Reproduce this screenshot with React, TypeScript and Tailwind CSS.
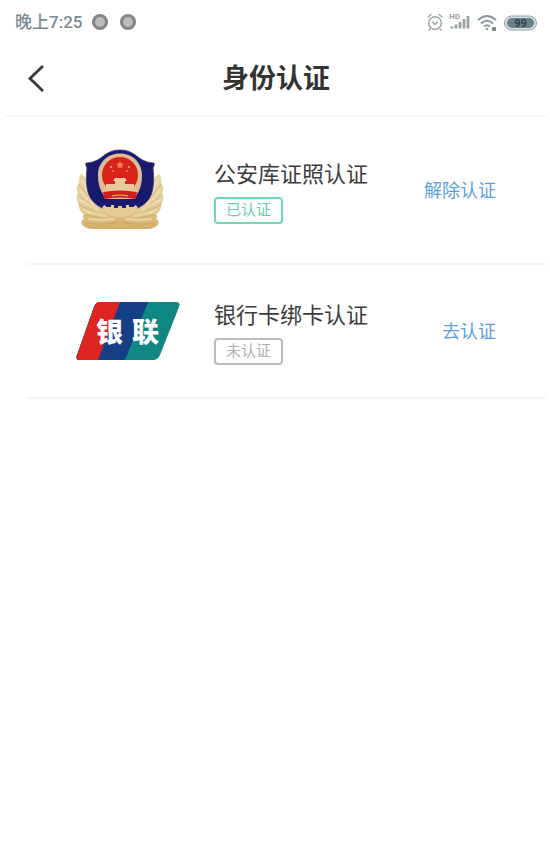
import type { ReactNode } from 'react';
import clsx from 'clsx';

const PoliceEmblem = () => (
  <svg viewBox="0 0 88 82" className="h-[82px] w-[88px]" aria-hidden="true">
    <defs>
      <linearGradient id="gold" x1="0" y1="0" x2="0" y2="1">
        <stop offset="0" stopColor="#e9d6ac" />
        <stop offset="0.6" stopColor="#e3cb97" />
        <stop offset="1" stopColor="#d2ad66" />
      </linearGradient>
    </defs>

    <path
      d="M5 25Q8 25 12 33L24 56H64L76 33Q80 25 83 25Q86 28 85 34Q89 38 86 44Q89 50 85 55Q86 61 80 65Q82 68 80 70Q84 72 82 75Q80 80 70 80H18Q8 80 6 75Q4 72 8 70Q6 68 8 65Q2 61 3 55Q-1 50 2 44Q-1 38 3 34Q2 28 5 25Z"
      fill="url(#gold)"
    />
    <g fill="none" stroke="#c19a52" strokeWidth="1" strokeLinecap="round" opacity="0.45">
      <path d="M3 35Q9 42 14 52M2 45Q8 50 17 60M3 56Q10 59 22 65M8 66Q16 67 29 70M10 74Q28 77 42 73" />
      <path d="M85 35Q79 42 74 52M86 45Q80 50 71 60M85 56Q78 59 66 65M80 66Q72 67 59 70M78 74Q60 77 46 73" />
    </g>
    <g fill="none" stroke="#f4e6c4" strokeWidth="2.500" strokeLinecap="round" opacity="0.5">
      <path d="M6 31Q9 38 13 44M4 41Q9 48 17 55M4 51Q12 56 22 61M7 61Q17 65 30 67M13 70Q26 72 38 70" />
      <path d="M82 31Q79 38 75 44M84 41Q79 48 71 55M84 51Q76 56 66 61M81 61Q71 65 58 67M75 70Q62 72 50 70" />
    </g>

    <path
      d="M44 1C36 1 31 4 26 8C21 12 15 14 10 14Q9 16 11 19C10 29 10 38 13 46Q16 54 26 59H62Q72 54 75 46C78 38 78 29 77 19Q79 16 78 14C73 14 67 12 62 8C57 4 52 1 44 1Z"
      fill="#191970"
      stroke="#3d356f"
      strokeWidth="0.800"
    />
    <path
      d="M44 4.500C31 4.500 22 14 22 26C22 35 24 41 28 47Q29 50 32 50H56Q59 50 60 47C64 41 66 35 66 26C66 14 57 4.500 44 4.500Z"
      fill="#dcbd93"
    />
    <circle cx="44" cy="26" r="18" fill="#d8231d" />
    <g fill="#ef8a54">
      <path d="M44 12l1.200 2.700 2.900.2-2.200 1.900.7 2.800-2.600-1.500-2.500 1.500.7-2.800-2.200-1.900 2.900-.2Z" />
      <circle cx="35" cy="18" r="1.300" />
      <circle cx="37" cy="22" r="1.100" />
      <circle cx="53" cy="18" r="1.300" />
      <circle cx="51" cy="22" r="1.100" />
    </g>
    <path
      d="M39 29H49L51 32H49V35H58V40H61V43H27V40H30V35H39V32H37Z"
      fill="#ecc99a"
    />
    <path d="M27 43Q44 40 61 43L60 50Q44 47 28 50Z" fill="#cf211c" />
    <path d="M36 47Q44 45 52 47" stroke="#e58e62" strokeWidth="1.500" fill="none" />
    <path
      d="M26 59l2-3 3 2h4v-2h3v3h4v-2h4v2h4v-3h3v2h4l3-2 2 3-7 7Q44 70 33 66Z"
      fill="#e4ca94"
    />
  </svg>
);

const UnionPayLogo = () => (
  <svg viewBox="0 0 104 58" className="h-[58px] w-[104px]" aria-hidden="true">
    <defs>
      <clipPath id="card">
        <path d="M24 0H100Q105 0 103 5L84 53Q82 58 77 58H4Q-1 58 1 53L18 5Q20 0 24 0Z" />
      </clipPath>
    </defs>
    <g clipPath="url(#card)">
      <path d="M0 0H104V58H0Z" fill="#0f8782" />
      <path d="M0 0H72L49 58H0Z" fill="#153f87" />
      <path d="M0 0H44L22 58H0Z" fill="#df2523" />
    </g>
    <text
      y="40"
      fill="#fff"
      className="font-['Noto_Sans_CJK_SC',sans-serif] text-[27px] font-black"
    >
      <tspan x="20">银</tspan>
      <tspan x="56">联</tspan>
    </text>
  </svg>
);

const StatusIcons = () => (
  <svg viewBox="0 0 112 20" className="h-5 w-28" fill="none" aria-hidden="true">
    <g stroke="#9aa3a7" strokeWidth="1.400" strokeLinecap="round">
      <circle cx="9" cy="11" r="6.300" />
      <path d="M6.500 10L9 12.500L11.500 10M2 5L5 2.500M13 2.500L16 5M4 17L3 18M14 17L15 18" />
    </g>
    <text x="23" y="7" fill="#9aa3a7" className="font-['Roboto',sans-serif] text-[8px] font-bold">
      HD
    </text>
    <path
      d="M26 16.500v-2M30 16.500v-4M34 16.500V10M38 16.500V7M42 16.500V4"
      stroke="#9aa3a7"
      strokeWidth="2.800"
    />
    <g stroke="#8d989d" strokeWidth="2">
      <path d="M52 8Q61 0 70 8M55 11.500Q61 6 67 11.500M58 14.500Q61 12 64 14.500" />
    </g>
    <circle cx="61" cy="17" r="1.300" fill="#8d989d" />
    <rect x="66" y="15" width="4" height="4" rx="1" fill="#7d888d" />
    <rect x="78.500" y="4" width="32" height="14" rx="7" fill="#d3dde1" stroke="#93a3aa" />
    <rect x="81" y="6" width="27" height="10" rx="5" fill="#6b8089" />
    <text
      x="94.500"
      y="15"
      fill="#2f424b"
      textAnchor="middle"
      className="font-['Roboto',sans-serif] text-[11px] font-bold"
    >
      99
    </text>
  </svg>
);

const StatusBar = () => (
  <div className="flex h-11 items-center pr-2 pl-[9px] text-[#7b8b92]">
    <span className="pt-0.5 text-[17px] font-medium">晚上7:25</span>
    <span className="ml-2.5 size-4 rounded-full border-3 border-[#858585] bg-[#bdbdbd]" />
    <span className="ml-3 size-4 rounded-full border-3 border-[#858585] bg-[#bdbdbd]" />
    <div className="ml-auto">
      <StatusIcons />
    </div>
  </div>
);

interface AuthRowProps {
  logo: ReactNode;
  title: string;
  status: string;
  verified?: boolean;
  action: string;
  className: string;
}

const AuthRow = ({ logo, title, status, verified, action, className }: AuthRowProps) => (
  <li
    className={clsx(
      'ml-[22px] flex items-center border-b-2 border-[#f1f5f9] pr-[50px] pl-12',
      className,
    )}
  >
    <div className="w-[138px] shrink-0">{logo}</div>

    <div className="flex flex-col items-start gap-1">
      <span className="text-[22px] leading-9 text-[#3c3c3c]">{title}</span>
      <span
        className={clsx(
          'rounded-sm border-2 px-2.5 text-[15px] leading-[23px]',
          verified ? 'border-[#6fdbb4] text-[#62d0a8]' : 'border-[#bcbcbc] text-[#b0b0b0]',
        )}
      >
        {status}
      </span>
    </div>

    <button type="button" className="ml-auto pt-0.5 text-lg text-[#5b9fe3]">
      {action}
    </button>
  </li>
);

export default function App() {
  return (
    <main className="min-h-screen bg-white pr-1 pl-1.5 font-['Roboto','Noto_Sans_CJK_SC',sans-serif]">
      <StatusBar />

      <header className="grid h-[73px] grid-cols-[1fr_auto_1fr] items-center border-b-2 border-[#f5f6f7] px-5">
        <button type="button" aria-label="返回" className="w-8 pb-1">
          <svg viewBox="0 0 20 28" className="h-7 w-5" fill="none" aria-hidden="true">
            <path d="M17 2L4 14.500L17 27" stroke="#3a3a3a" strokeWidth="2.800" />
          </svg>
        </button>
        <h1 className="text-[27px] font-bold text-[#333]">身份认证</h1>
      </header>

      <ul>
        <AuthRow
          logo={<PoliceEmblem />}
          title="公安库证照认证"
          status="已认证"
          verified
          action="解除认证"
          className="h-[148px]"
        />
        <AuthRow
          logo={<UnionPayLogo />}
          title="银行卡绑卡认证"
          status="未认证"
          action="去认证"
          className="h-[134px]"
        />
      </ul>
    </main>
  );
}
